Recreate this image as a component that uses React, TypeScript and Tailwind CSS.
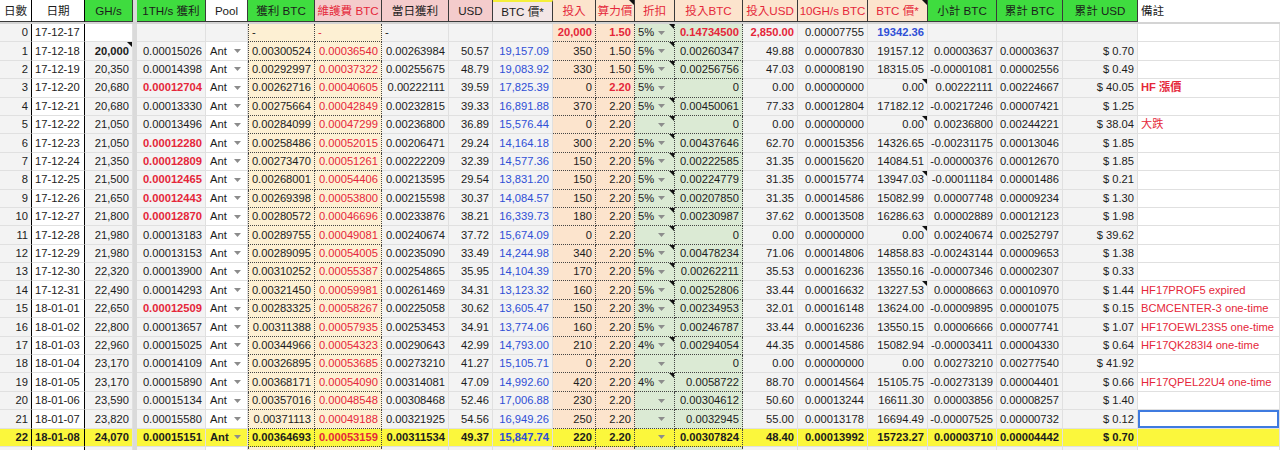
import React from 'react';

const GRID =
  'grid grid-cols-[32px_53px_48px_4px_69px_42px_67px_67px_67px_44px_60px_43px_39px_40px_68px_55px_70px_60px_69px_66px_75px_142px]';

const RED = 'text-[#e5273a]';
const BLUE = 'text-[#2f4fd6]';

// n, 日期, GH/s, 1TH/s, 獲利, 維護費, 當日, USD, BTC價, 投入, 算力價, 折扣, 投入BTC, 投入USD, 10GH/s, BTC價*, 小計, 累計, 累計USD, 備註
const ROWS: string[][] = [
  ['1', '17-12-18', '20,000', '0.00015026', '0.00300524', '0.00036540', '0.00263984', '50.57', '19,157.09', '350', '1.50', '5%', '0.00260347', '49.88', '0.00007830', '19157.12', '0.00003637', '0.00003637', '$ 0.70', ''],
  ['2', '17-12-19', '20,350', '0.00014398', '0.00292997', '0.00037322', '0.00255675', '48.79', '19,083.92', '330', '1.50', '5%', '0.00256756', '47.03', '0.00008190', '18315.05', '-0.00001081', '0.00002556', '$ 0.49', ''],
  ['3', '17-12-20', '20,680', '0.00012704', '0.00262716', '0.00040605', '0.00222111', '39.59', '17,825.39', '0', '2.20', '5%', '0', '0.00', '0.00000000', '0.00', '0.00222111', '0.00224667', '$ 40.05', 'HF 漲價'],
  ['4', '17-12-21', '20,680', '0.00013330', '0.00275664', '0.00042849', '0.00232815', '39.33', '16,891.88', '370', '2.20', '5%', '0.00450061', '77.33', '0.00012804', '17182.12', '-0.00217246', '0.00007421', '$ 1.25', ''],
  ['5', '17-12-22', '21,050', '0.00013496', '0.00284099', '0.00047299', '0.00236800', '36.89', '15,576.44', '0', '2.20', '', '0', '0.00', '0.00000000', '0.00', '0.00236800', '0.00244221', '$ 38.04', '大跌'],
  ['6', '17-12-23', '21,050', '0.00012280', '0.00258486', '0.00052015', '0.00206471', '29.24', '14,164.18', '300', '2.20', '5%', '0.00437646', '62.70', '0.00015356', '14326.65', '-0.00231175', '0.00013046', '$ 1.85', ''],
  ['7', '17-12-24', '21,350', '0.00012809', '0.00273470', '0.00051261', '0.00222209', '32.39', '14,577.36', '150', '2.20', '5%', '0.00222585', '31.35', '0.00015620', '14084.51', '-0.00000376', '0.00012670', '$ 1.85', ''],
  ['8', '17-12-25', '21,500', '0.00012465', '0.00268001', '0.00054406', '0.00213595', '29.54', '13,831.20', '150', '2.20', '5%', '0.00224779', '31.35', '0.00015774', '13947.03', '-0.00011184', '0.00001486', '$ 0.21', ''],
  ['9', '17-12-26', '21,650', '0.00012443', '0.00269398', '0.00053800', '0.00215598', '30.37', '14,084.57', '150', '2.20', '5%', '0.00207850', '31.35', '0.00014586', '15082.99', '0.00007748', '0.00009234', '$ 1.30', ''],
  ['10', '17-12-27', '21,800', '0.00012870', '0.00280572', '0.00046696', '0.00233876', '38.21', '16,339.73', '180', '2.20', '5%', '0.00230987', '37.62', '0.00013508', '16286.63', '0.00002889', '0.00012123', '$ 1.98', ''],
  ['11', '17-12-28', '21,980', '0.00013183', '0.00289755', '0.00049081', '0.00240674', '37.72', '15,674.09', '0', '2.20', '', '0', '0.00', '0.00000000', '0.00', '0.00240674', '0.00252797', '$ 39.62', ''],
  ['12', '17-12-29', '21,980', '0.00013153', '0.00289095', '0.00054005', '0.00235090', '33.49', '14,244.98', '340', '2.20', '5%', '0.00478234', '71.06', '0.00014806', '14858.83', '-0.00243144', '0.00009653', '$ 1.38', ''],
  ['13', '17-12-30', '22,320', '0.00013900', '0.00310252', '0.00055387', '0.00254865', '35.95', '14,104.39', '170', '2.20', '5%', '0.00262211', '35.53', '0.00016236', '13550.16', '-0.00007346', '0.00002307', '$ 0.33', ''],
  ['14', '17-12-31', '22,490', '0.00014293', '0.00321450', '0.00059981', '0.00261469', '34.31', '13,123.32', '160', '2.20', '5%', '0.00252806', '33.44', '0.00016632', '13227.53', '0.00008663', '0.00010970', '$ 1.44', 'HF17PROF5 expired'],
  ['15', '18-01-01', '22,650', '0.00012509', '0.00283325', '0.00058267', '0.00225058', '30.62', '13,605.47', '150', '2.20', '3%', '0.00234953', '32.01', '0.00016148', '13624.00', '-0.00009895', '0.00001075', '$ 0.15', 'BCMCENTER-3 one-time'],
  ['16', '18-01-02', '22,800', '0.00013657', '0.00311388', '0.00057935', '0.00253453', '34.91', '13,774.06', '160', '2.20', '5%', '0.00246787', '33.44', '0.00016236', '13550.15', '0.00006666', '0.00007741', '$ 1.07', 'HF17OEWL23S5 one-time'],
  ['17', '18-01-03', '22,960', '0.00015025', '0.00344966', '0.00054323', '0.00290643', '42.99', '14,793.00', '210', '2.20', '4%', '0.00294054', '44.35', '0.00014586', '15082.94', '-0.00003411', '0.00004330', '$ 0.64', 'HF17QK283I4 one-time'],
  ['18', '18-01-04', '23,170', '0.00014109', '0.00326895', '0.00053685', '0.00273210', '41.27', '15,105.71', '0', '2.20', '', '0', '0.00', '0.00000000', '0.00', '0.00273210', '0.00277540', '$ 41.92', ''],
  ['19', '18-01-05', '23,170', '0.00015890', '0.00368171', '0.00054090', '0.00314081', '47.09', '14,992.60', '420', '2.20', '4%', '0.0058722', '88.70', '0.00014564', '15105.75', '-0.00273139', '0.00004401', '$ 0.66', 'HF17QPEL22U4 one-time'],
  ['20', '18-01-06', '23,590', '0.00015134', '0.00357016', '0.00048548', '0.00308468', '52.46', '17,006.88', '230', '2.20', '', '0.00304612', '50.60', '0.00013244', '16611.30', '0.00003856', '0.00008257', '$ 1.40', ''],
  ['21', '18-01-07', '23,820', '0.00015580', '0.00371113', '0.00049188', '0.00321925', '54.56', '16,949.26', '250', '2.20', '', '0.0032945', '55.00', '0.00013178', '16694.49', '-0.00007525', '0.00000732', '$ 0.12', ''],
  ['22', '18-01-08', '24,070', '0.00015151', '0.00364693', '0.00053159', '0.00311534', '49.37', '15,847.74', '220', '2.20', '', '0.00307824', '48.40', '0.00013992', '15723.27', '0.00003710', '0.00004442', '$ 0.70', ''],
];

const RED_TH = ['3', '6', '7', '8', '9', '10', '15'];
const DISC_TRI = ['1', '2', '4', '5', '6', '7', '8', '9', '10', '11', '12', '13', '14', '15', '17', '19'];
const PX2_TRI = ['3', '5', '8', '11', '14'];

const LINE = 'border-b border-r border-b-[#e0e0e0] border-r-[#e0e0e0]';
const DOT = 'border-b border-r border-dotted border-b-[#444] border-r-[#444]';
const NUM = 'justify-end pr-[3px]';
const HEAD = 'justify-center border-b border-r border-b-[#3a3a3a] border-r-[#3a3a3a]';

function Tri() {
  return (
    <span className="absolute right-0 top-0 h-0 w-0 border-l-[5px] border-t-[5px] border-l-transparent border-t-[#111]" />
  );
}

function Arrow() {
  return (
    <svg width="7" height="4" viewBox="0 0 7 4" className="shrink-0">
      <path d="M0 0h7L3.5 4z" fill="#8c8c8c" />
    </svg>
  );
}

function C({ c = '', tri, children }: { c?: string; tri?: boolean; children?: React.ReactNode }) {
  return (
    <div className={`relative flex h-full items-center overflow-hidden whitespace-nowrap ${c}`}>
      {children}
      {tri && <Tri />}
    </div>
  );
}

function HeaderRow() {
  return (
    <div className={`${GRID} h-[22px] text-[11.6px]`}>
      <C c={`${HEAD} bg-white border-r-black`}>日數</C>
      <C c={`${HEAD} bg-white border-r-black`}>日期</C>
      <C c={`${HEAD} bg-[#3fdc3f]`}>GH/s</C>
      <C c="bg-[#dadada]" />
      <C c={`${HEAD} bg-[#3fdc3f]`}>1TH/s 獲利</C>
      <C c={`${HEAD} bg-white`}>Pool</C>
      <C c={`${HEAD} bg-[#3fdc3f]`}>獲利 BTC</C>
      <C c={`${HEAD} bg-[#f4cccc] ${RED}`}>維護費 BTC</C>
      <C c={`${HEAD} bg-[#f4cccc]`}>當日獲利</C>
      <C c={`${HEAD} bg-[#f4cccc]`}>USD</C>
      <C c={`${HEAD} bg-[#f3e6e6] border-t-2 border-t-[#f5ef3a]`}>BTC 價*</C>
      <C c={`${HEAD} bg-[#fce4cd] ${RED}`}>投入</C>
      <C c={`${HEAD} bg-[#fce4cd] ${RED}`} tri>算力價</C>
      <C c={`${HEAD} bg-[#fce4cd] ${RED}`}>折扣</C>
      <C c={`${HEAD} bg-[#fce4cd] ${RED}`}>投入BTC</C>
      <C c={`${HEAD} bg-[#fce4cd] ${RED}`}>投入USD</C>
      <C c={`${HEAD} bg-[#fce4cd] ${RED}`}>10GH/s BTC</C>
      <C c={`${HEAD} bg-[#fce4cd] ${RED}`} tri>BTC 價*</C>
      <C c={`${HEAD} bg-[#3fdc3f]`}>小計 BTC</C>
      <C c={`${HEAD} bg-[#3fdc3f]`}>累計 BTC</C>
      <C c={`${HEAD} bg-[#3fdc3f]`}>累計 USD</C>
      <C c="bg-white pl-[3px]">備註</C>
    </div>
  );
}

function FirstRow() {
  return (
    <div className={`${GRID} h-[18.4px]`}>
      <C c={`${LINE} bg-[#f3f3f3] border-r-black ${NUM}`}>0</C>
      <C c={`${LINE} bg-white border-r-black pl-[3px]`}>17-12-17</C>
      <C c={`${LINE} bg-white`} />
      <C c="bg-[#dadada]" />
      <C c={`${LINE} bg-[#f3f3f3]`} />
      <C c={`${LINE} bg-[#f3f3f3]`} />
      <C c={`${DOT} border-l border-l-[#444] bg-[#fdf0d3] pl-[3px]`}>-</C>
      <C c={`${DOT} bg-[#fdf0d3] pl-[3px] ${RED}`}>-</C>
      <C c={`${LINE} bg-[#f3f3f3] pl-[3px]`}>-</C>
      <C c={`${LINE} bg-[#f3f3f3]`} />
      <C c={`${LINE} bg-[#f3f3f3]`} />
      <C c={`${DOT} bg-[#fce4cd] font-bold ${RED} ${NUM}`}>20,000</C>
      <C c={`${DOT} bg-[#fce4cd] font-bold ${RED} ${NUM}`}>1.50</C>
      <C c={`${DOT} bg-[#dbead4] justify-between pl-[3px] pr-[9px]`} tri>
        <span>5%</span>
        <Arrow />
      </C>
      <C c={`${DOT} bg-[#dbead4] font-bold ${RED} ${NUM}`}>0.14734500</C>
      <C c={`${LINE} bg-[#f3f3f3] font-bold ${RED} ${NUM}`}>2,850.00</C>
      <C c={`${LINE} bg-[#f3f3f3] ${NUM}`}>0.00007755</C>
      <C c={`${LINE} bg-[#f3f3f3] font-bold ${BLUE} ${NUM}`}>19342.36</C>
      <C c={`${LINE} bg-[#f3f3f3]`} />
      <C c={`${LINE} bg-[#f3f3f3]`} />
      <C c={`${LINE} bg-[#f3f3f3]`} />
      <C c={`${LINE} bg-white`} />
    </div>
  );
}

function DataRow({ r, hi, empty }: { r: string[]; hi?: boolean; empty?: boolean }) {
  const n = r[0];
  const g = hi ? 'bg-[#fbf73c]' : 'bg-[#f3f3f3]';
  const ly = hi ? 'bg-[#fbf73c]' : 'bg-[#fdf0d3]';
  const pe = hi ? 'bg-[#fbf73c]' : 'bg-[#fce4cd]';
  const lg = hi ? 'bg-[#fbf73c]' : 'bg-[#dbead4]';
  const w = hi ? 'bg-[#fbf73c]' : 'bg-white';
  const sel = n === '21' ? 'shadow-[inset_0_0_0_2px_#3f7be0]' : '';

  return (
    <div className={`${GRID} h-[18.4px] ${hi ? 'font-bold' : ''}`}>
      <C c={`${LINE} ${g} border-r-black ${NUM}`}>{n}</C>
      <C c={`${LINE} ${w} border-r-black pl-[3px]`}>{r[1]}</C>
      <C c={`${LINE} ${g} ${NUM} ${n === '1' ? 'font-bold' : ''}`} tri={n === '1'}>
        {r[2]}
      </C>
      <C c="bg-[#dadada]" />
      <C c={`${LINE} ${g} ${NUM} ${RED_TH.includes(n) ? `font-bold ${RED}` : ''}`}>{r[3]}</C>
      <C c={`${LINE} ${w} justify-between pl-[4px] pr-[6px]`}>
        {!empty && (
          <>
            <span>Ant</span>
            <Arrow />
          </>
        )}
      </C>
      <C c={`${DOT} border-l border-l-[#444] ${ly} ${NUM}`}>{r[4]}</C>
      <C c={`${DOT} ${ly} ${RED} ${NUM}`}>{r[5]}</C>
      <C c={`${LINE} ${g} ${NUM}`}>{r[6]}</C>
      <C c={`${LINE} ${g} ${NUM}`}>{r[7]}</C>
      <C c={`${LINE} ${g} ${BLUE} ${NUM}`}>{r[8]}</C>
      <C c={`${DOT} ${pe} ${NUM}`}>{r[9]}</C>
      <C c={`${DOT} ${pe} ${NUM} ${n === '3' ? `font-bold ${RED}` : ''}`}>{r[10]}</C>
      <C c={`${DOT} ${lg} justify-between pl-[3px] pr-[9px]`} tri={DISC_TRI.includes(n)}>
        <span>{r[11]}</span>
        {!empty && <Arrow />}
      </C>
      <C c={`${DOT} ${lg} ${NUM}`}>{r[12]}</C>
      <C c={`${LINE} ${g} ${NUM}`}>{r[13]}</C>
      <C c={`${LINE} ${g} ${NUM}`}>{r[14]}</C>
      <C c={`${LINE} ${g} ${NUM}`} tri={PX2_TRI.includes(n)}>
        {r[15]}
      </C>
      <C c={`${LINE} ${g} ${NUM}`}>{r[16]}</C>
      <C c={`${LINE} ${g} ${NUM}`}>{r[17]}</C>
      <C c={`${LINE} ${g} ${NUM}`}>{r[18]}</C>
      <C c={`${LINE} ${w} ${sel} pl-[3px] ${RED} ${n === '3' ? 'font-bold' : ''}`}>{r[19]}</C>
    </div>
  );
}

export default function App() {
  return (
    <div className="h-[450px] w-[1280px] overflow-hidden bg-white font-['Liberation_Sans','Noto_Sans_CJK_TC',sans-serif] text-[11.2px] text-[#1c1c1c]">
      <HeaderRow />
      <div className="h-[2px] bg-[#d4d4d4]" />
      <FirstRow />
      {ROWS.map((r) => (
        <DataRow key={r[0]} r={r} hi={r[0] === '22'} />
      ))}
      <DataRow r={Array(20).fill('')} empty />
    </div>
  );
}
